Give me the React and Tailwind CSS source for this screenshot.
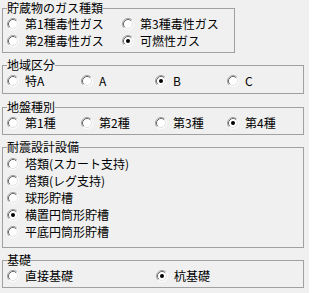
import React from "react";

function Radio({ checked }) {
  return (
    <svg width="12" height="12" viewBox="0 0 12 12" className="shrink-0">
      <circle cx="6" cy="6" r="5" fill="#ffffff" />
      <path d="M2.11 9.89 A5.5 5.5 0 0 1 9.89 2.11" fill="none" stroke="#a0a0a0" strokeWidth="1" />
      <path d="M2.82 9.18 A4.5 4.5 0 0 1 9.18 2.82" fill="none" stroke="#696969" strokeWidth="1" />
      <path d="M9.89 2.11 A5.5 5.5 0 0 1 2.11 9.89" fill="none" stroke="#ffffff" strokeWidth="1" />
      <path d="M9.18 2.82 A4.5 4.5 0 0 1 2.82 9.18" fill="none" stroke="#e3e3e3" strokeWidth="1" />
      {checked && <circle cx="6" cy="6" r="2" fill="#000000" />}
    </svg>
  );
}

function Option({ label, checked, width }) {
  return (
    <div className={`flex items-center gap-[6px] h-[17px] ${width}`}>
      <Radio checked={checked} />
      <span className="leading-[17px] whitespace-nowrap">{label}</span>
    </div>
  );
}

function Group({ title, className, children }) {
  return (
    <fieldset className={`border border-[#a0a0a0] pl-[4px] ${className}`}>
      <legend className="leading-[14px] h-[14px]">{title}</legend>
      {children}
    </fieldset>
  );
}

export default function App() {
  return (
    <div
      className="w-[309px] h-[293px] bg-[#f0f0f0] text-black text-[12px] pl-[2px] pt-[1px] overflow-hidden"
      style={{ fontFamily: '"Noto Sans CJK JP", "Noto Sans", sans-serif' }}
    >
      <Group title="貯蔵物のガス種類" className="w-[233px] pb-[3px]">
        <div className="grid grid-cols-[115px_1fr]">
          <Option label="第1種毒性ガス" />
          <Option label="第3種毒性ガス" />
          <Option label="第2種毒性ガス" />
          <Option label="可燃性ガス" checked />
        </div>
      </Group>

      <Group title="地域区分" className="w-[302px] mt-[5px] pb-[4px]">
        <div className="flex">
          <Option label="特A" width="w-[74px]" />
          <Option label="A" width="w-[74px]" />
          <Option label="B" checked width="w-[72px]" />
          <Option label="C" />
        </div>
      </Group>

      <Group title="地盤種別" className="w-[302px] mt-[6px] pb-[3px]">
        <div className="flex">
          <Option label="第1種" width="w-[74px]" />
          <Option label="第2種" width="w-[74px]" />
          <Option label="第3種" width="w-[72px]" />
          <Option label="第4種" checked />
        </div>
      </Group>

      <Group title="耐震設計設備" className="w-[302px] mt-[5px] pb-[7px]">
        <div className="flex flex-col pt-[1px]">
          <Option label="塔類(スカート支持)" />
          <Option label="塔類(レグ支持)" />
          <Option label="球形貯槽" />
          <Option label="横置円筒形貯槽" checked />
          <Option label="平底円筒形貯槽" />
        </div>
      </Group>

      <Group title="基礎" className="w-[302px] mt-[5px] pb-[3px]">
        <div className="flex">
          <Option label="直接基礎" width="w-[149px]" />
          <Option label="杭基礎" checked />
        </div>
      </Group>
    </div>
  );
}
